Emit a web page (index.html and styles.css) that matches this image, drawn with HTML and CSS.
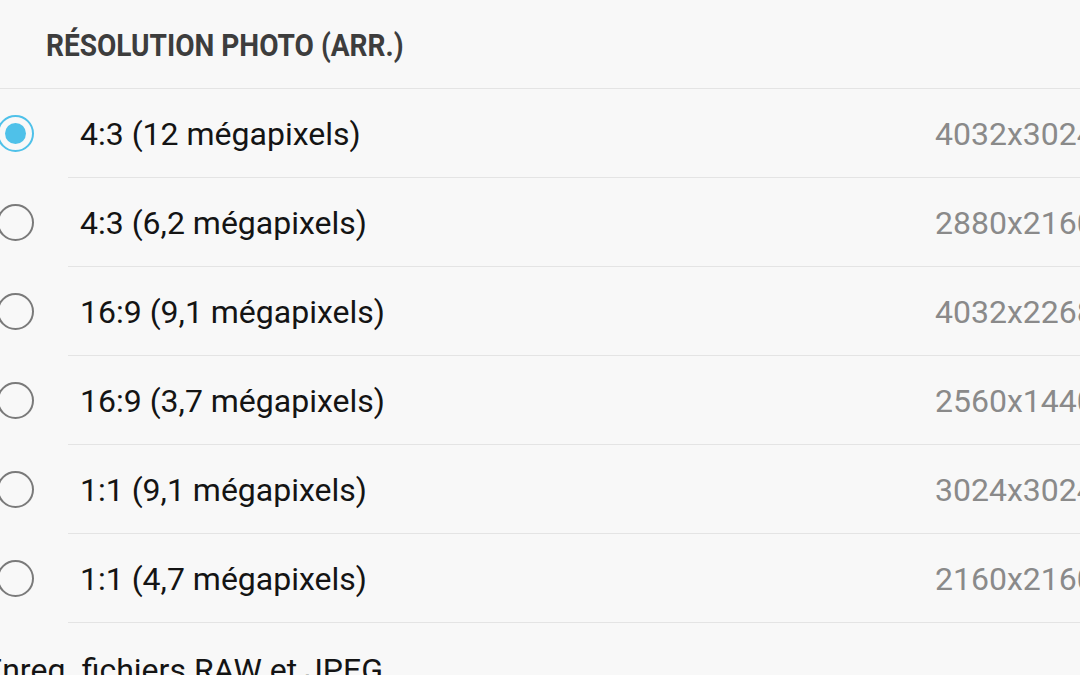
FILE: index.html
```html
<!DOCTYPE html>
<html lang="fr">
<head>
<meta charset="utf-8">
<link rel="stylesheet" href="styles.css">
</head>
<body>
<div class="page">
  <header class="section-head"><span class="section-title">RÉSOLUTION PHOTO (ARR.)</span></header>
  <ul class="list">
    <li class="row selected">
      <span class="radio"></span>
      <div class="content"><span class="label">4:3 (12 mégapixels)</span><span class="value">4032x3024</span></div>
    </li>
    <li class="row">
      <span class="radio"></span>
      <div class="content"><span class="label">4:3 (6,2 mégapixels)</span><span class="value">2880x2160</span></div>
    </li>
    <li class="row">
      <span class="radio"></span>
      <div class="content"><span class="label">16:9 (9,1 mégapixels)</span><span class="value">4032x2268</span></div>
    </li>
    <li class="row">
      <span class="radio"></span>
      <div class="content"><span class="label">16:9 (3,7 mégapixels)</span><span class="value">2560x1440</span></div>
    </li>
    <li class="row">
      <span class="radio"></span>
      <div class="content"><span class="label">1:1 (9,1 mégapixels)</span><span class="value">3024x3024</span></div>
    </li>
    <li class="row">
      <span class="radio"></span>
      <div class="content"><span class="label">1:1 (4,7 mégapixels)</span><span class="value">2160x2160</span></div>
    </li>
  </ul>
  <div class="footer-item">Enreg. fichiers RAW et JPEG</div>
</div>
</body>
</html>
```

FILE: styles.css
```css
html, body {
  margin: 0;
  padding: 0;
  background: #f8f8f8;
  overflow: hidden;
}
.page {
  width: 1080px;
  height: 675px;
  overflow: hidden;
  font-family: Roboto, "Liberation Sans", sans-serif;
}
.section-head {
  height: 88px;
  border-bottom: 1px solid #e4e4e4;
  padding-left: 46px;
  display: flex;
  align-items: center;
  line-height: 1;
}
.section-title {
  display: inline-block;
  font-weight: 700;
  font-size: 31px;
  color: #3d3d3d;
  white-space: nowrap;
  transform: scaleX(0.905);
  transform-origin: left center;
  margin-top: 3px;
}
.list {
  list-style: none;
  margin: 0;
  padding: 0;
}
.row {
  display: flex;
  align-items: stretch;
  height: 89px;
}
.radio {
  flex: none;
  width: 37px;
  height: 37px;
  margin-left: -3px;
  margin-right: 34px;
  align-self: center;
  border: 2.5px solid #7a7a7a;
  border-radius: 50%;
  box-sizing: border-box;
  position: relative;
}
.row.selected .radio {
  border-color: #4fc1e9;
}
.row.selected .radio::after {
  content: "";
  position: absolute;
  left: 50%;
  top: 50%;
  width: 21px;
  height: 21px;
  margin: -10.5px 0 0 -10.5px;
  border-radius: 50%;
  background: #4fc1e9;
}
.content {
  flex: 1;
  display: flex;
  align-items: center;
  border-bottom: 1px solid #e4e4e4;
  padding-left: 12px;
  padding-top: 2px;
  white-space: nowrap;
  font-size: 32px;
}
.label {
  color: #141414;
  flex: 1;
}
.value {
  color: #8a8a8a;
  width: 145px;
  overflow: visible;
}
.footer-item {
  margin-left: -16px;
  margin-top: 28px;
  font-size: 32px;
  color: #141414;
  white-space: nowrap;
}
```
